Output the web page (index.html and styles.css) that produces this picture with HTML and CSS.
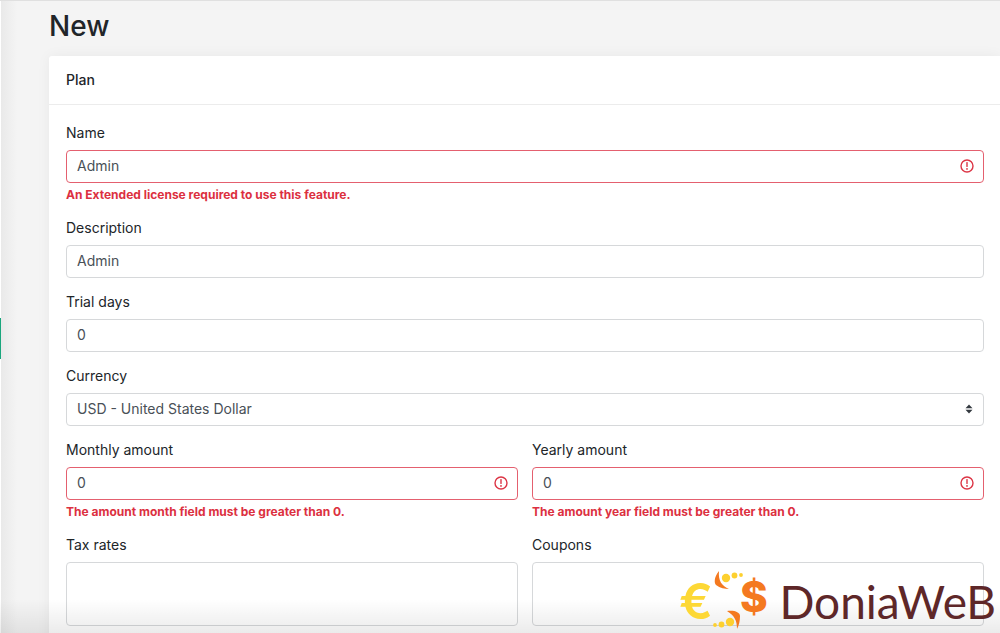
FILE: index.html
```html
<!DOCTYPE html>
<html lang="en">
<head>
<meta charset="utf-8">
<meta name="viewport" content="width=device-width, initial-scale=1">
<title>New plan</title>
<link rel="stylesheet" href="styles.css">
</head>
<body>
<div class="shell">
  <aside class="rail"><span class="rail-active"></span></aside>
  <main class="content">
    <h1 class="title">New</h1>
    <form class="card">
      <h2 class="card-header">Plan</h2>
      <div class="card-body">
        <div class="group">
          <label class="label" for="name">Name</label>
          <div class="control">
            <input class="field field-invalid" id="name" type="text" value="Admin" aria-describedby="name-error">
            <svg class="alert" viewBox="0 0 14 14" aria-hidden="true"><circle cx="7" cy="7" r="6"/><path d="M7 3.6v3.8"/><circle class="alert-dot" cx="7" cy="9.900" r=".9"/></svg>
          </div>
          <p class="error" id="name-error">An Extended license required to use this feature.</p>
        </div>
        <div class="group">
          <label class="label" for="description">Description</label>
          <input class="field" id="description" type="text" value="Admin">
        </div>
        <div class="group">
          <label class="label" for="trial">Trial days</label>
          <input class="field" id="trial" type="text" value="0">
        </div>
        <div class="group">
          <label class="label" for="currency">Currency</label>
          <div class="control">
            <select class="field" id="currency"><option>USD - United States Dollar</option></select>
            <svg class="arrows" viewBox="0 0 8 10" aria-hidden="true"><path d="M4 .5 7.500 4.200H.5ZM4 9.500.5 5.800h7Z"/></svg>
          </div>
        </div>
        <div class="row">
          <div class="group">
            <label class="label" for="monthly">Monthly amount</label>
            <div class="control">
              <input class="field field-invalid" id="monthly" type="text" value="0" aria-describedby="monthly-error">
              <svg class="alert" viewBox="0 0 14 14" aria-hidden="true"><circle cx="7" cy="7" r="6"/><path d="M7 3.6v3.8"/><circle class="alert-dot" cx="7" cy="9.900" r=".9"/></svg>
            </div>
            <p class="error" id="monthly-error">The amount month field must be greater than 0.</p>
          </div>
          <div class="group">
            <label class="label" for="yearly">Yearly amount</label>
            <div class="control">
              <input class="field field-invalid" id="yearly" type="text" value="0" aria-describedby="yearly-error">
              <svg class="alert" viewBox="0 0 14 14" aria-hidden="true"><circle cx="7" cy="7" r="6"/><path d="M7 3.6v3.8"/><circle class="alert-dot" cx="7" cy="9.900" r=".9"/></svg>
            </div>
            <p class="error" id="yearly-error">The amount year field must be greater than 0.</p>
          </div>
        </div>
        <div class="row">
          <div class="group">
            <label class="label" for="tax">Tax rates</label>
            <textarea class="field field-area" id="tax"></textarea>
          </div>
          <div class="group">
            <label class="label" for="coupons">Coupons</label>
            <textarea class="field field-area" id="coupons"></textarea>
          </div>
        </div>
      </div>
    </form>
  </main>
</div>
<div class="fade"></div>
<div class="brand">
  <svg class="brand-mark" viewBox="0 0 92 60" aria-hidden="true">
    <text class="euro" x="0" y="49">€</text>
    <text class="dollar" x="61" y="42">$</text>
    <path class="orange" d="M40 1C35 7 35 13 37 15 41 18 46 19 50 19 43 16 39 11 40 1ZM48 41C55 40 61 42 61 46 61 51 60 55 58 59 58 51 56 46 48 41Z"/>
    <g class="yellow"><circle cx="47" cy="8" r="4.200"/><circle cx="55.500" cy="5.500" r="2.900"/><circle cx="62" cy="5" r="1.900"/><circle cx="51" cy="52" r="4.200"/><circle cx="42.500" cy="54.500" r="2.900"/><circle cx="36" cy="55" r="1.900"/></g>
  </svg>
  <span class="brand-name">DoniaWeB</span>
</div>
</body>
</html>
```
FILE: styles.css
```css
* { box-sizing: border-box; }

body {
  margin: 0;
  height: 100vh;
  overflow: hidden;
  background: #f4f4f4;
  color: #212529;
  font: 14px/21px Inter, "Liberation Sans", sans-serif;
}

.shell {
  display: flex;
  min-height: 100vh;
  border-top: 1px solid #e0e0e0;
}

.rail {
  position: relative;
  flex: none;
  width: 1px;
  background: #fff;
}

.rail-active {
  position: absolute;
  top: 317px;
  left: 0;
  width: 1px;
  height: 41px;
  background: #1aa67d;
}

.content {
  flex: 1;
  min-width: 0;
  padding: 8px 0 0 48px;
  background: linear-gradient(to right, #e9e9e9, #f4f4f4 16px);
}

.title {
  margin: 0 0 13px;
  font-size: 28px;
  font-weight: 500;
  line-height: 34px;
}

.card {
  background: #fff;
  border-radius: 3px 0 0 0;
  box-shadow: 0 0 14px rgba(0, 0, 0, .05);
}

.card-header {
  margin: 0;
  padding: 13px 17px 14px;
  border-bottom: 1px solid #ececec;
  font-size: 14px;
  font-weight: 500;
  line-height: 21px;
}

.card-body { padding: 17px 16px 17px 17px; }

.group { margin-bottom: 13px; }

.row {
  display: grid;
  grid-template-columns: 1fr 1fr;
  gap: 14px;
}

.label {
  display: block;
  margin-bottom: 7px;
}

.control { position: relative; }

.field {
  display: block;
  width: 100%;
  height: 33px;
  padding: 0 10px 2px;
  border: 1px solid #d6d8da;
  border-radius: 4px;
  background: #fff;
  color: #495057;
  font: inherit;
  appearance: none;
  outline: 0;
}

.field-invalid { border-color: #e4606f; }

.field-area {
  height: 64px;
  resize: none;
}

.alert {
  position: absolute;
  top: 9px;
  right: 10px;
  width: 14px;
  height: 14px;
  fill: none;
  stroke: #dc3545;
  stroke-width: 1.4;
  stroke-linecap: round;
}

.alert-dot {
  fill: #dc3545;
  stroke: none;
}

.arrows {
  position: absolute;
  top: 11px;
  right: 11px;
  width: 8px;
  height: 10px;
  fill: #343a40;
}

.error {
  margin: 3px 0 0;
  color: #dc3040;
  font-size: 12px;
  font-weight: 700;
  line-height: 18px;
}

.fade {
  position: absolute;
  right: 0;
  bottom: 0;
  left: 0;
  height: 34px;
  background: linear-gradient(transparent, rgba(0, 0, 0, .08));
  pointer-events: none;
}

.brand {
  position: absolute;
  right: 4px;
  bottom: 3px;
  display: flex;
  align-items: flex-end;
  gap: 8px;
}

.brand-mark {
  width: 92px;
  height: 60px;
}

.euro {
  fill: #fdd835;
  font: 600 50px Inter, sans-serif;
}

.dollar {
  fill: #f47920;
  font: 800 42px Inter, sans-serif;
}

.orange { fill: #f47920; }

.yellow { fill: #fdd02f; }

.brand-name {
  color: #5e2728;
  font: 400 46px/56px Lato, sans-serif;
}
```
